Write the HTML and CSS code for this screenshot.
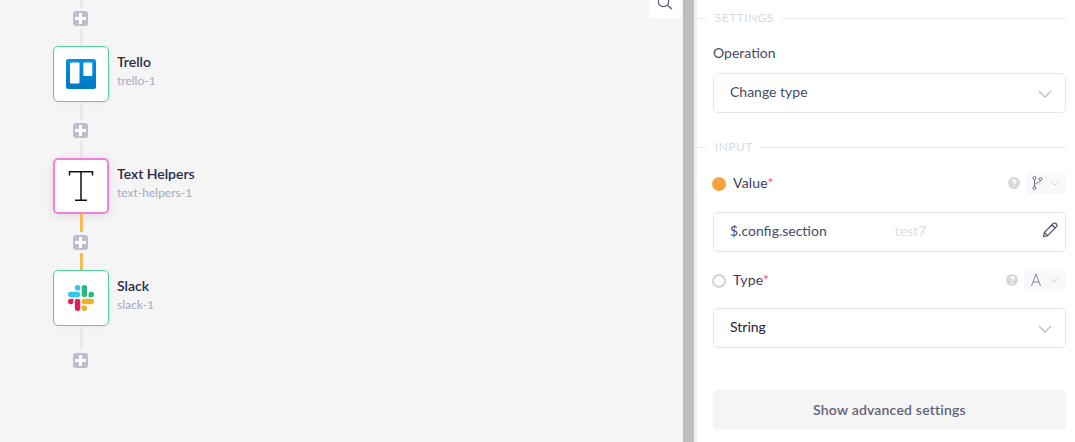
FILE: index.html
```html
<!DOCTYPE html>
<html lang="en">
<head>
<meta charset="utf-8">
<title>Workflow editor</title>
<link rel="stylesheet" href="styles.css">
</head>
<body>
<div class="app">
  <main class="canvas">
    <button class="zoom-btn" aria-label="Zoom">
      <svg width="16" height="16" viewBox="0 0 16 16" class="zoom-ico"><circle cx="5.500" cy="5.500" r="5.200" /><path d="M9.500 9.500L14 13" /></svg>
    </button>
    <div class="flow">
      <div class="conn conn-first">
        <span class="line"></span>
        <span class="plus"></span>
        <span class="line"></span>
      </div>
      <div class="step">
        <div class="node node-ok">
          <svg width="30" height="30" viewBox="0 0 30 30"><defs><linearGradient id="tb" x1="0" y1="0" x2="0" y2="1"><stop offset="0" stop-color="#0091e6"/><stop offset="1" stop-color="#0079bf"/></linearGradient></defs><rect width="30" height="30" rx="2.500" fill="url(#tb)"/><rect x="4" y="3.500" width="9.500" height="21" rx="1" fill="#fff"/><rect x="17.300" y="3.500" width="9" height="13.500" rx="1" fill="#fff"/></svg>
        </div>
        <div class="meta"><div class="title">Trello</div><div class="sub">trello-1</div></div>
      </div>
      <div class="conn">
        <span class="line"></span>
        <span class="plus"></span>
        <span class="line"></span>
      </div>
      <div class="step">
        <div class="node node-active">
          <svg width="26" height="32" viewBox="0 0 26 32" class="t-ico"><path d="M1.500 5.500V1.800h23v3.700M13 1.800v28.400M7 30.200h12"/></svg>
        </div>
        <div class="meta"><div class="title">Text Helpers</div><div class="sub">text-helpers-1</div></div>
      </div>
      <div class="conn conn-live">
        <span class="line"></span>
        <span class="plus"></span>
        <span class="line"></span>
      </div>
      <div class="step">
        <div class="node node-ok">
          <svg width="26" height="26" viewBox="0 0 24 24">
            <path fill="#e01e5a" d="M5.042 15.165a2.528 2.528 0 0 1-2.52 2.523A2.528 2.528 0 0 1 0 15.165a2.527 2.527 0 0 1 2.522-2.52h2.52v2.52zM6.313 15.165a2.527 2.527 0 0 1 2.521-2.52 2.527 2.527 0 0 1 2.521 2.52v6.313A2.528 2.528 0 0 1 8.834 24a2.528 2.528 0 0 1-2.521-2.522v-6.313z"/>
            <path fill="#36c5f0" d="M8.834 5.042a2.528 2.528 0 0 1-2.521-2.52A2.528 2.528 0 0 1 8.834 0a2.528 2.528 0 0 1 2.521 2.522v2.52H8.834zM8.834 6.313a2.528 2.528 0 0 1 2.521 2.521 2.528 2.528 0 0 1-2.521 2.521H2.522A2.528 2.528 0 0 1 0 8.834a2.528 2.528 0 0 1 2.522-2.521h6.312z"/>
            <path fill="#2eb67d" d="M18.956 8.834a2.528 2.528 0 0 1 2.522-2.521A2.528 2.528 0 0 1 24 8.834a2.528 2.528 0 0 1-2.522 2.521h-2.522V8.834zM17.688 8.834a2.528 2.528 0 0 1-2.523 2.521 2.527 2.527 0 0 1-2.52-2.521V2.522A2.527 2.527 0 0 1 15.165 0a2.528 2.528 0 0 1 2.523 2.522v6.312z"/>
            <path fill="#ecb22e" d="M15.165 18.956a2.528 2.528 0 0 1 2.523 2.522A2.528 2.528 0 0 1 15.165 24a2.527 2.527 0 0 1-2.52-2.522v-2.522h2.52zM15.165 17.688a2.527 2.527 0 0 1-2.52-2.523 2.526 2.526 0 0 1 2.52-2.52h6.313A2.527 2.527 0 0 1 24 15.165a2.528 2.528 0 0 1-2.522 2.523h-6.313z"/>
          </svg>
        </div>
        <div class="meta"><div class="title">Slack</div><div class="sub">slack-1</div></div>
      </div>
      <div class="conn conn-last">
        <span class="line"></span>
        <span class="plus"></span>
      </div>
    </div>
  </main>
  <div class="divider"></div>
  <aside class="panel">
    <div class="legend legend-settings"><span>SETTINGS</span></div>
    <label class="field-label">Operation</label>
    <div class="box box-op">
      <span class="box-text">Change type</span>
      <svg class="chev" width="14" height="8" viewBox="0 0 14 8"><path d="M1 1l6 6 6-6"/></svg>
    </div>
    <div class="legend legend-input"><span>INPUT</span></div>
    <div class="prop prop-value">
      <span class="dot dot-on"></span>
      <span class="prop-name">Value<em>*</em></span>
      <svg class="help" width="12" height="12" viewBox="0 0 12 12"><circle cx="6" cy="6" r="6"/><path d="M4.300 4.700c0-2.300 3.500-2.300 3.500-.2 0 1.300-1.800 1.300-1.800 2.700M6 8.400v1.300"/></svg>
      <span class="mode">
        <svg class="branch" width="11" height="14" viewBox="0 0 11 14"><circle cx="2.500" cy="2" r="1.500"/><circle cx="2.500" cy="12" r="1.500"/><circle cx="8.500" cy="3" r="1.500"/><path d="M2.500 3.500v7M8.500 4.500c0 2.500-6 2-6 5"/></svg>
        <svg class="mini-chev" width="8" height="5" viewBox="0 0 8 5"><path d="M.5.500L4 4 7.500.500"/></svg>
      </span>
    </div>
    <div class="box box-input">
      <span class="box-text">$.config.section</span>
      <span class="hint">test7</span>
      <svg class="pencil" width="16" height="16" viewBox="0 0 16 16"><path d="M1.500 14.500l.8-4L11.300 1.500a1.800 1.800 0 0 1 2.600 0l.6.600a1.800 1.800 0 0 1 0 2.600L5.500 13.700zM2.300 10.500l3.200 3.200M10 3l3 3"/></svg>
    </div>
    <div class="prop prop-type">
      <span class="dot"></span>
      <span class="prop-name">Type<em>*</em></span>
      <svg class="help" width="12" height="12" viewBox="0 0 12 12"><circle cx="6" cy="6" r="6"/><path d="M4.300 4.700c0-2.300 3.500-2.300 3.500-.2 0 1.300-1.800 1.300-1.800 2.700M6 8.400v1.300"/></svg>
      <span class="mode mode-wide">
        <svg class="type-a" width="12" height="14" viewBox="0 0 12 14"><path d="M1.500 13L6 1l4.500 12M3 9h6"/></svg>
        <svg class="mini-chev" width="8" height="5" viewBox="0 0 8 5"><path d="M.5.500L4 4 7.500.500"/></svg>
      </span>
    </div>
    <div class="box box-type">
      <span class="box-text box-strong">String</span>
      <svg class="chev" width="14" height="8" viewBox="0 0 14 8"><path d="M1 1l6 6 6-6"/></svg>
    </div>
    <button class="advanced">Show advanced settings</button>
  </aside>
</div>
</body>
</html>
```
FILE: styles.css
```css
* { box-sizing: border-box; }
html, body { margin: 0; height: 100%; overflow: hidden; }
body { font-family: "Lato", "Noto Sans", sans-serif; font-size: 14px; color: #3d3d5c; background: #fff; }
.app { display: flex; width: 1075px; height: 442px; }

.canvas { position: relative; width: 683px; background: #f5f5f5; padding-left: 53px; overflow: hidden; }
.zoom-btn { position: absolute; left: 649px; top: -14px; width: 32px; height: 32px; background: #fff; border: 0; border-radius: 3px; padding: 0; }
.zoom-ico { position: absolute; left: 9px; top: 10px; fill: none; stroke: #55556f; stroke-width: 1.200; }

.flow { display: flex; flex-direction: column; }
.conn { width: 56px; height: 56px; display: flex; flex-direction: column; align-items: flex-start; gap: 3px; }
.conn .line { width: 3px; margin-left: 27px; flex: 1; background: #e9e9ef; }
.conn .line:first-child { flex: 0 0 18px; }
.conn-first { height: 46px; }
.conn-first .line:first-child { flex: 0 0 8px; }
.conn-live .line { background: #f7bb54; }
.conn-last { height: 42px; }
.conn-last .line:first-child { flex: 0 0 24px; }
.plus { flex: none; width: 15px; height: 15px; margin-left: 20px; border-radius: 3px;
  background:
    linear-gradient(#fff, #fff) center / 11px 3px no-repeat,
    linear-gradient(#fff, #fff) center / 3px 11px no-repeat,
    #bdbdcb; }

.step { display: flex; align-items: center; gap: 8px; height: 56px; }
.node { flex: none; width: 56px; height: 56px; background: #fff; border: 1px solid #4fd09a; border-radius: 5px; display: flex; align-items: center; justify-content: center; box-shadow: 0 2px 8px rgba(0,0,0,.03); }
.node-active { border: 2px solid #f27fdc; box-shadow: 0 2px 10px rgba(0,0,0,.1); }
.t-ico { fill: none; stroke: #111; stroke-width: 1.500; }
.meta { display: flex; flex-direction: column; gap: 3px; margin-top: -8px; }
.title { font-size: 14px; font-weight: 600; line-height: 17px; color: #2a2a47; }
.sub { font-size: 12px; line-height: 15px; color: #a8a8bd; }

.divider { flex: none; width: 11px; background: #bdbdbd; }
.panel { flex: none; width: 381px; border-left: 3px solid #eeeef6; background: #fff; padding-right: 9px; display: flex; flex-direction: column; }

.legend { display: flex; align-items: center; font-size: 12px; line-height: 14px; color: #d6dce4; letter-spacing: .4px; height: 14px; }
.legend::before { content: ""; width: 9px; height: 1px; background: #e9ecf1; }
.legend::after { content: ""; flex: 1; height: 1px; background: #e9ecf1; }
.legend span { padding: 0 7px 0 9px; }
.legend-settings { margin-top: 11px; }
.field-label { margin: 19px 0 0 16px; line-height: 17px; color: #4a4a68; }
.box { position: relative; margin-left: 16px; height: 40px; border: 1px solid #e6e6ec; border-radius: 5px; display: flex; align-items: center; padding: 0 0 3px 16px; background: #fff; }
.box-op { margin-top: 12px; }
.box-text { color: #4a4a68; }
.box-strong { color: #22223a; }
.chev { position: absolute; right: 13px; top: 16px; fill: none; stroke: #bcbccb; stroke-width: 1.300; }
.legend-input { margin-top: 27px; }

.prop { display: flex; align-items: center; height: 22px; margin-left: 15px; }
.prop-value { margin-top: 18px; }
.prop-type { margin-top: 17px; }
.dot { flex: none; width: 14px; height: 14px; border-radius: 50%; border: 2px solid #cdd6e0; margin-top: 2px; }
.dot-on { background: #f9a33c; border-color: #f9a33c; }
.prop-name { margin: -2px 0 0 7px; color: #3d3d5c; letter-spacing: .2px; flex: 1; }
.prop-name em { font-style: normal; color: #f0596e; }
.help { flex: none; margin-right: 6px; }
.help circle { fill: #d4d9e0; }
.help path { fill: none; stroke: #fff; stroke-width: 1.400; }
.mode { flex: none; display: flex; align-items: center; gap: 8px; width: 40px; height: 22px; background: #f7f8fa; border-radius: 3px; padding-left: 6px; }
.mode-wide { width: 42px; }
.branch { fill: none; stroke: #6d7388; stroke-width: 1; }
.type-a { fill: none; stroke: #7f89a3; stroke-width: 1; }
.mini-chev { fill: none; stroke: #cfd3dc; stroke-width: 1; }

.box-input { margin-top: 18px; }
.hint { margin-left: 68px; color: #dcdee6; }
.pencil { position: absolute; right: 7px; top: 9px; fill: none; stroke: #4a4a5e; stroke-width: 1.100; }
.box-type { margin-top: 17px; }
.advanced { margin: 42px 0 0 16px; height: 40px; border: 0; border-radius: 5px; background: #f5f5f5; font: inherit; font-weight: 600; color: #62627c; letter-spacing: .2px; padding: 0 0 2px; }
```
